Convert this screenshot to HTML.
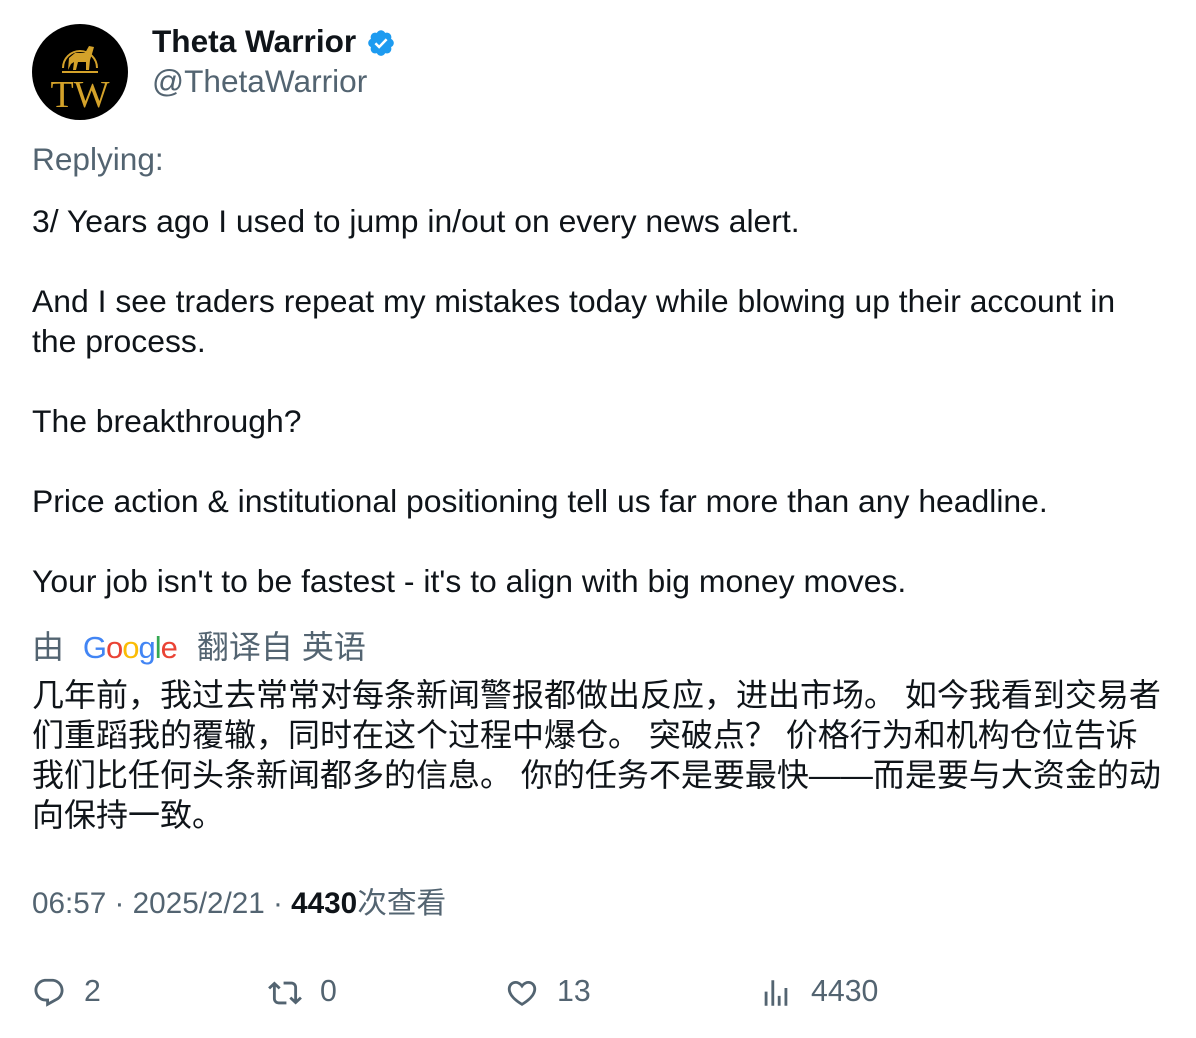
<!DOCTYPE html>
<html><head><meta charset="utf-8"><style>
body{margin:0;background:#fff;width:1196px;height:1038px;overflow:hidden;font-family:"Liberation Sans","Noto Sans CJK SC",sans-serif;color:#0f1419}
.abs{position:absolute;white-space:nowrap}
.g{color:#536471}
</style></head><body>
<div class="abs" style="left:32px;top:24px;width:96px;height:96px;border-radius:50%;background:#000;overflow:hidden">
<svg width="96" height="96" viewBox="0 0 96 96">
<path d="M31 44 A17 17 0 1 1 65 44" fill="none" stroke="#d4a22a" stroke-width="2"/>
<line x1="30" y1="48" x2="66" y2="48" stroke="#d4a22a" stroke-width="2"/>
<path d="M36 46 L37 34 L43 29 L53 29 L57 22 L62 23 L60 30 L58 36 L57 46 L54 46 L54 38 L46 38 L44 46 L41 46 L42 38 L39 40 Z" fill="#d4a22a"/>
<text x="48" y="83" text-anchor="middle" font-family="Liberation Serif,serif" font-size="38" fill="#d4a22a">TW</text>
</svg></div>
<div class="abs" style="left:152px;top:22px;font-size:31.6px;font-weight:bold;line-height:38px">Theta Warrior</div>
<svg class="abs" style="left:366px;top:28px" width="30" height="30" viewBox="0 0 24 24"><path fill="#1d9bf0" d="M22.25 12c0-1.430-.88-2.670-2.190-3.340.46-1.390.2-2.900-.81-3.910s-2.520-1.270-3.910-.81c-.66-1.310-1.910-2.190-3.340-2.190s-2.670.88-3.330 2.190c-1.400-.46-2.910-.2-3.920.81s-1.260 2.520-.8 3.910c-1.310.67-2.200 1.910-2.200 3.340s.89 2.670 2.200 3.340c-.46 1.390-.21 2.900.8 3.910s2.520 1.260 3.910.81c.67 1.310 1.910 2.190 3.340 2.190s2.680-.88 3.340-2.190c1.390.45 2.900.2 3.910-.81s1.270-2.520.81-3.910c1.310-.67 2.190-1.910 2.190-3.340z"/><path d="M7.5 12.2l3 3 6-6.2" fill="none" stroke="#fff" stroke-width="2"/></svg>
<div class="abs g" style="left:152px;top:62px;font-size:31.6px;line-height:38px">@ThetaWarrior</div>
<div class="abs g" style="left:32px;top:140px;font-size:31.6px;line-height:38px">Replying:</div>
<div class="abs" style="left:32px;top:201px;font-size:31.9px;line-height:40px;white-space:pre">3/ Years ago I used to jump in/out on every news alert.

And I see traders repeat my mistakes today while blowing up their account in
the process.

The breakthrough?

Price action &amp; institutional positioning tell us far more than any headline.

Your job isn't to be fastest - it's to align with big money moves.</div>
<div class="abs g" style="left:32px;top:627px;font-size:32px;line-height:40px">由 <span style="font-size:31px;letter-spacing:-1px;margin:0 20px 0 10px"><span style="color:#4285f4">G</span><span style="color:#ea4335">o</span><span style="color:#fbbc05">o</span><span style="color:#4285f4">g</span><span style="color:#34a853">l</span><span style="color:#ea4335">e</span></span>翻译自 英语</div>
<div class="abs" style="left:32px;top:675px;width:1132px;white-space:normal;font-size:32px;line-height:40px">几年前，我过去常常对每条新闻警报都做出反应，进出市场。 如今我看到交易者们重蹈我的覆辙，同时在这个过程中爆仓。 突破点？ 价格行为和机构仓位告诉我们比任何头条新闻都多的信息。 你的任务不是要最快——而是要与大资金的动向保持一致。</div>
<div class="abs g" style="left:32px;top:884px;font-size:29.7px;line-height:40px">06:57 · 2025/2/21 · <b style="color:#0f1419">4430</b>次查看</div>
<svg class="abs" style="left:32px;top:976px" width="34" height="34" viewBox="0 0 24 24"><path fill="#536471" d="M1.751 10c0-4.42 3.584-8 8.005-8h4.366c4.49 0 8.129 3.64 8.129 8.13 0 2.96-1.607 5.68-4.196 7.11l-8.054 4.460v-3.690h-.067c-4.49.1-8.183-3.510-8.183-8.010zm8.005-6c-3.317 0-6.005 2.690-6.005 6 0 3.370 2.770 6.080 6.138 6.010l.351-.01h1.761v2.300l5.087-2.810c1.951-1.080 3.163-3.130 3.163-5.360 0-3.390-2.744-6.130-6.129-6.130H9.756z"/></svg>
<div class="abs g" style="left:84px;top:972px;font-size:30.3px;line-height:40px">2</div>
<svg class="abs" style="left:268px;top:976px" width="34" height="34" viewBox="0 0 24 24"><path fill="#536471" d="M4.5 3.88l4.432 4.14-1.364 1.46L5.5 7.55V16c0 1.1.896 2 2 2H13v2H7.5c-2.209 0-4-1.79-4-4V7.55L1.432 9.48.068 8.02 4.5 3.88zM16.5 6H11V4h5.5c2.209 0 4 1.79 4 4v8.45l2.068-1.93 1.364 1.46-4.432 4.14-4.432-4.14 1.364-1.46 2.068 1.93V8c0-1.1-.896-2-2-2z"/></svg>
<div class="abs g" style="left:320px;top:972px;font-size:30.3px;line-height:40px">0</div>
<svg class="abs" style="left:505px;top:976px" width="34" height="34" viewBox="0 0 24 24"><path fill="#536471" d="M16.697 5.5c-1.222-.06-2.679.51-3.890 2.160l-.805 1.090-.806-1.090C9.984 6.010 8.526 5.440 7.304 5.500c-1.243.07-2.349.78-2.910 1.910-.552 1.120-.633 2.780.479 4.820 1.074 1.970 3.257 4.270 7.129 6.610 3.870-2.340 6.052-4.640 7.126-6.610 1.111-2.040 1.030-3.700.477-4.820-.561-1.130-1.666-1.840-2.908-1.910zm4.187 7.690c-1.351 2.480-4.001 5.120-8.379 7.670l-.503.3-.504-.3c-4.379-2.550-7.029-5.190-8.382-7.670-1.360-2.500-1.410-4.860-.514-6.670.887-1.790 2.647-2.910 4.601-3.010 1.651-.09 3.368.56 4.798 2.010 1.429-1.450 3.146-2.100 4.796-2.010 1.954.1 3.714 1.220 4.601 3.010.896 1.810.846 4.170-.514 6.670z"/></svg>
<div class="abs g" style="left:557px;top:972px;font-size:30.3px;line-height:40px">13</div>
<svg class="abs" style="left:759px;top:976px" width="34" height="34" viewBox="0 0 24 24"><path fill="#536471" d="M8.75 21V3h2v18h-2zM18 21V8.5h2V21h-2zM4 21l.004-10h2L6 21H4zm9.248 0v-7h2v7h-2z"/></svg>
<div class="abs g" style="left:811px;top:972px;font-size:30.3px;line-height:40px">4430</div>
</body></html>
